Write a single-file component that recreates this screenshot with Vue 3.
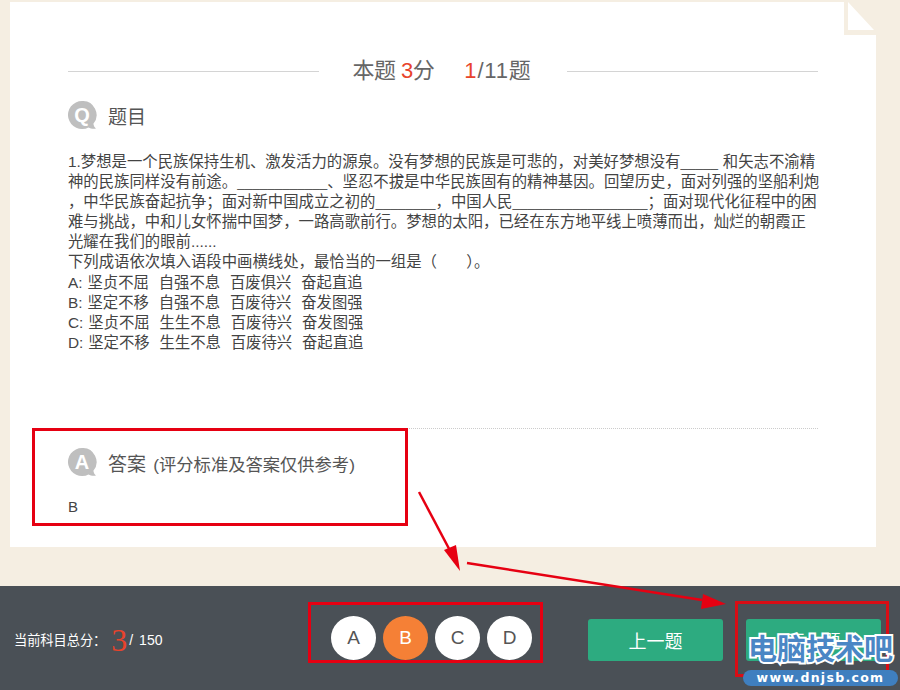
<template>
  <div class="page">
    <div class="main">
      <div class="paper">
        <svg class="fold" width="32" height="34" viewBox="0 0 32 34">
          <path d="M0 0H32V34H0Z" fill="#f5eee2" />
          <path d="M4 1L30 29H4Z" fill="#fff" />
        </svg>

        <div class="title-row">
          <span class="title-line"></span>
          <div class="title">
            <span class="title-score">本题 <em>3</em>分</span>
            <span class="title-count"><em>1</em>/11题</span>
          </div>
          <span class="title-line"></span>
        </div>

        <div class="sec-head">
          <span class="bubble">
            <svg width="29" height="29" viewBox="0 0 29 29">
              <path d="M14 0a14 14 0 1 0 6.500 26.400c1.800 1.200 5 1.800 7.500 1.200-1.500-1.200-2.400-3-2.600-4.800A14 14 0 0 0 14 0Z" fill="#bfbfbf" />
            </svg>
            <b>Q</b>
          </span>
          <span>题目</span>
        </div>

        <div class="question">
          <div v-for="(line, i) in lines" :key="i" class="q-line"><span v-for="(part, j) in split(line)" :key="j" :class="{ blank: part[0] === '_' }">{{ part }}</span></div>
        </div>

        <div class="divider"></div>

        <div class="sec-head answer-head">
          <span class="bubble">
            <svg width="29" height="29" viewBox="0 0 29 29">
              <path d="M14 0a14 14 0 1 0 6.500 26.400c1.800 1.200 5 1.800 7.500 1.200-1.500-1.200-2.400-3-2.600-4.800A14 14 0 0 0 14 0Z" fill="#bfbfbf" />
            </svg>
            <b>A</b>
          </span>
          <span>答案 <small>(评分标准及答案仅供参考)</small></span>
        </div>
        <div class="answer">B</div>
      </div>
    </div>

    <div class="bar">
      <div class="score">
        当前科目总分：<span class="score-now">3</span><span class="score-total">/ 150</span>
      </div>
      <div class="options">
        <span v-for="o in options" :key="o" :class="['opt', { on: o === 'B' }]">{{ o }}</span>
      </div>
      <div class="btns">
        <button class="btn">上一题</button>
        <button class="btn">下一题</button>
      </div>
    </div>

    <!-- red marks drawn on top of the screenshot -->
    <div class="mark mark-a"></div>
    <div class="mark mark-b"></div>
    <div class="mark mark-c"></div>
    <svg class="arrows" width="900" height="690" viewBox="0 0 900 690">
      <path d="M419 492L455 560" stroke="#e60012" stroke-width="2.500" fill="none" />
      <path d="M460 571L444 550L456 545Z" fill="#e60012" />
      <path d="M467 563L702 600" stroke="#e60012" stroke-width="2.500" fill="none" />
      <path d="M726 604L701 609L703 594Z" fill="#e60012" />
    </svg>

    <div class="logo">
      <div class="logo-name">电脑技术吧</div>
      <div class="logo-url">www.dnjsb.com</div>
    </div>
  </div>
</template>

<script setup>
const lines = [
  '1.梦想是一个民族保持生机、激发活力的源泉。没有梦想的民族是可悲的，对美好梦想没有_____ 和矢志不渝精',
  '神的民族同样没有前途。____________、坚忍不拔是中华民族固有的精神基因。回望历史，面对列强的坚船利炮',
  '，中华民族奋起抗争；面对新中国成立之初的________，中国人民__________________；面对现代化征程中的困',
  '难与挑战，中和儿女怀揣中国梦，一路高歌前行。梦想的太阳，已经在东方地平线上喷薄而出，灿烂的朝霞正',
  '光耀在我们的眼前......',
  '下列成语依次填入语段中画横线处，最恰当的一组是（      ）。',
  'A: 坚贞不屈  自强不息  百废俱兴  奋起直追',
  'B: 坚定不移  自强不息  百废待兴  奋发图强',
  'C: 坚贞不屈  生生不息  百废待兴  奋发图强',
  'D: 坚定不移  生生不息  百废待兴  奋起直追'
]
const options = ['A', 'B', 'C', 'D']

// underscores run narrower than the text around them
const split = (line) => line.split(/(_+)/).filter(Boolean)
</script>

<style>
html, body { margin: 0; background: #f5eee2; }
</style>

<style scoped>
.page { position: relative; width: 900px; height: 690px; overflow: hidden; background: #f5eee2; font-family: "Liberation Sans", "Noto Sans CJK SC", sans-serif; display: flex; flex-direction: column; }
.main { height: 586px; padding: 2px 24px 0 10px; box-sizing: border-box; }
.paper { position: relative; height: 545px; background: #fff; padding: 0 58px; box-sizing: border-box; }
.fold { position: absolute; top: -1px; right: 0; }

.title-row { display: flex; align-items: center; padding-top: 53px; height: 32px; gap: 33px; }
.title-line { flex: 1; height: 1px; background: #d4d4d4; }
.title { display: flex; gap: 30px; margin-right: 2px; font-size: 22px; line-height: 32px; color: #666; white-space: nowrap; }
.title em { font-style: normal; color: #e8432c; }
.title-score { letter-spacing: -0.500px; }
.title-count { letter-spacing: 0.800px; }

.sec-head { display: flex; align-items: center; gap: 11px; margin-top: 13px; height: 30px; font-size: 19px; color: #555; }
.sec-head small { font-size: 17.300px; margin-left: 2px; }
.bubble { position: relative; width: 29px; height: 29px; display: block; }
.bubble svg { display: block; }
.bubble b { position: absolute; top: 0; left: 0; width: 28px; line-height: 28px; text-align: center; color: #fff; font-size: 20px; font-weight: 700; }

.question { margin-top: 22px; font-size: 15.380px; word-spacing: 0.600px; color: #444; white-space: pre; }
.q-line { height: 20.100px; line-height: 20.100px; }
.blank { font-size: 13.500px; }
.divider { margin-top: 75px; border-top: 1px dotted #ccc; }
.answer-head { margin-top: 19px; }
.answer { margin-top: 19px; font-size: 15px; line-height: 20px; color: #444; }

.bar { height: 104px; background: #4a5056; display: flex; align-items: center; padding-left: 14px; }
.score { width: 317px; box-sizing: border-box; padding-top: 3px; color: #fff; font-size: 13.200px; display: flex; align-items: center; white-space: nowrap; }
.score-now { font-family: "Liberation Serif", serif; font-size: 32px; line-height: 36px; color: #e8432c; margin: 0 2px 0 5px; }
.score-total { font-size: 14px; word-spacing: 2px; }
.options { display: flex; gap: 7px; }
.opt { width: 45px; height: 44px; border-radius: 50%; background: #fff; color: #555; font-size: 19px; line-height: 44px; text-align: center; }
.opt.on { background: #f58036; color: #fff; }
.btns { display: flex; gap: 23px; margin-left: 56px; padding-top: 4px; }
.btn { width: 135px; height: 42px; border: none; border-radius: 3px; background: #2dab80; color: #fff; font-family: inherit; font-size: 18px; padding: 0; }

.mark { position: absolute; border: 3px solid #e60012; box-sizing: border-box; }
.mark-a { left: 32px; top: 428px; width: 376px; height: 98px; }
.mark-b { left: 308px; top: 602px; width: 235px; height: 61px; }
.mark-c { left: 735px; top: 601px; width: 154px; height: 76px; border-color: #d90d15; }
.arrows { position: absolute; left: 0; top: 0; }

.logo { position: absolute; left: 743px; top: 633px; width: 155px; }
.logo-name { font-size: 29px; line-height: 34px; font-weight: 700; text-align: center; color: #4a86c5; -webkit-text-stroke: 4px #fff; paint-order: stroke fill; white-space: nowrap; }
.logo-url { margin-top: 3px; height: 16px; border-radius: 8px; background: #3f7fbf; color: #fff; font-family: "DejaVu Sans", sans-serif; font-size: 12.500px; line-height: 16px; font-weight: 700; text-align: center; letter-spacing: 1.300px; white-space: nowrap; }
</style>
